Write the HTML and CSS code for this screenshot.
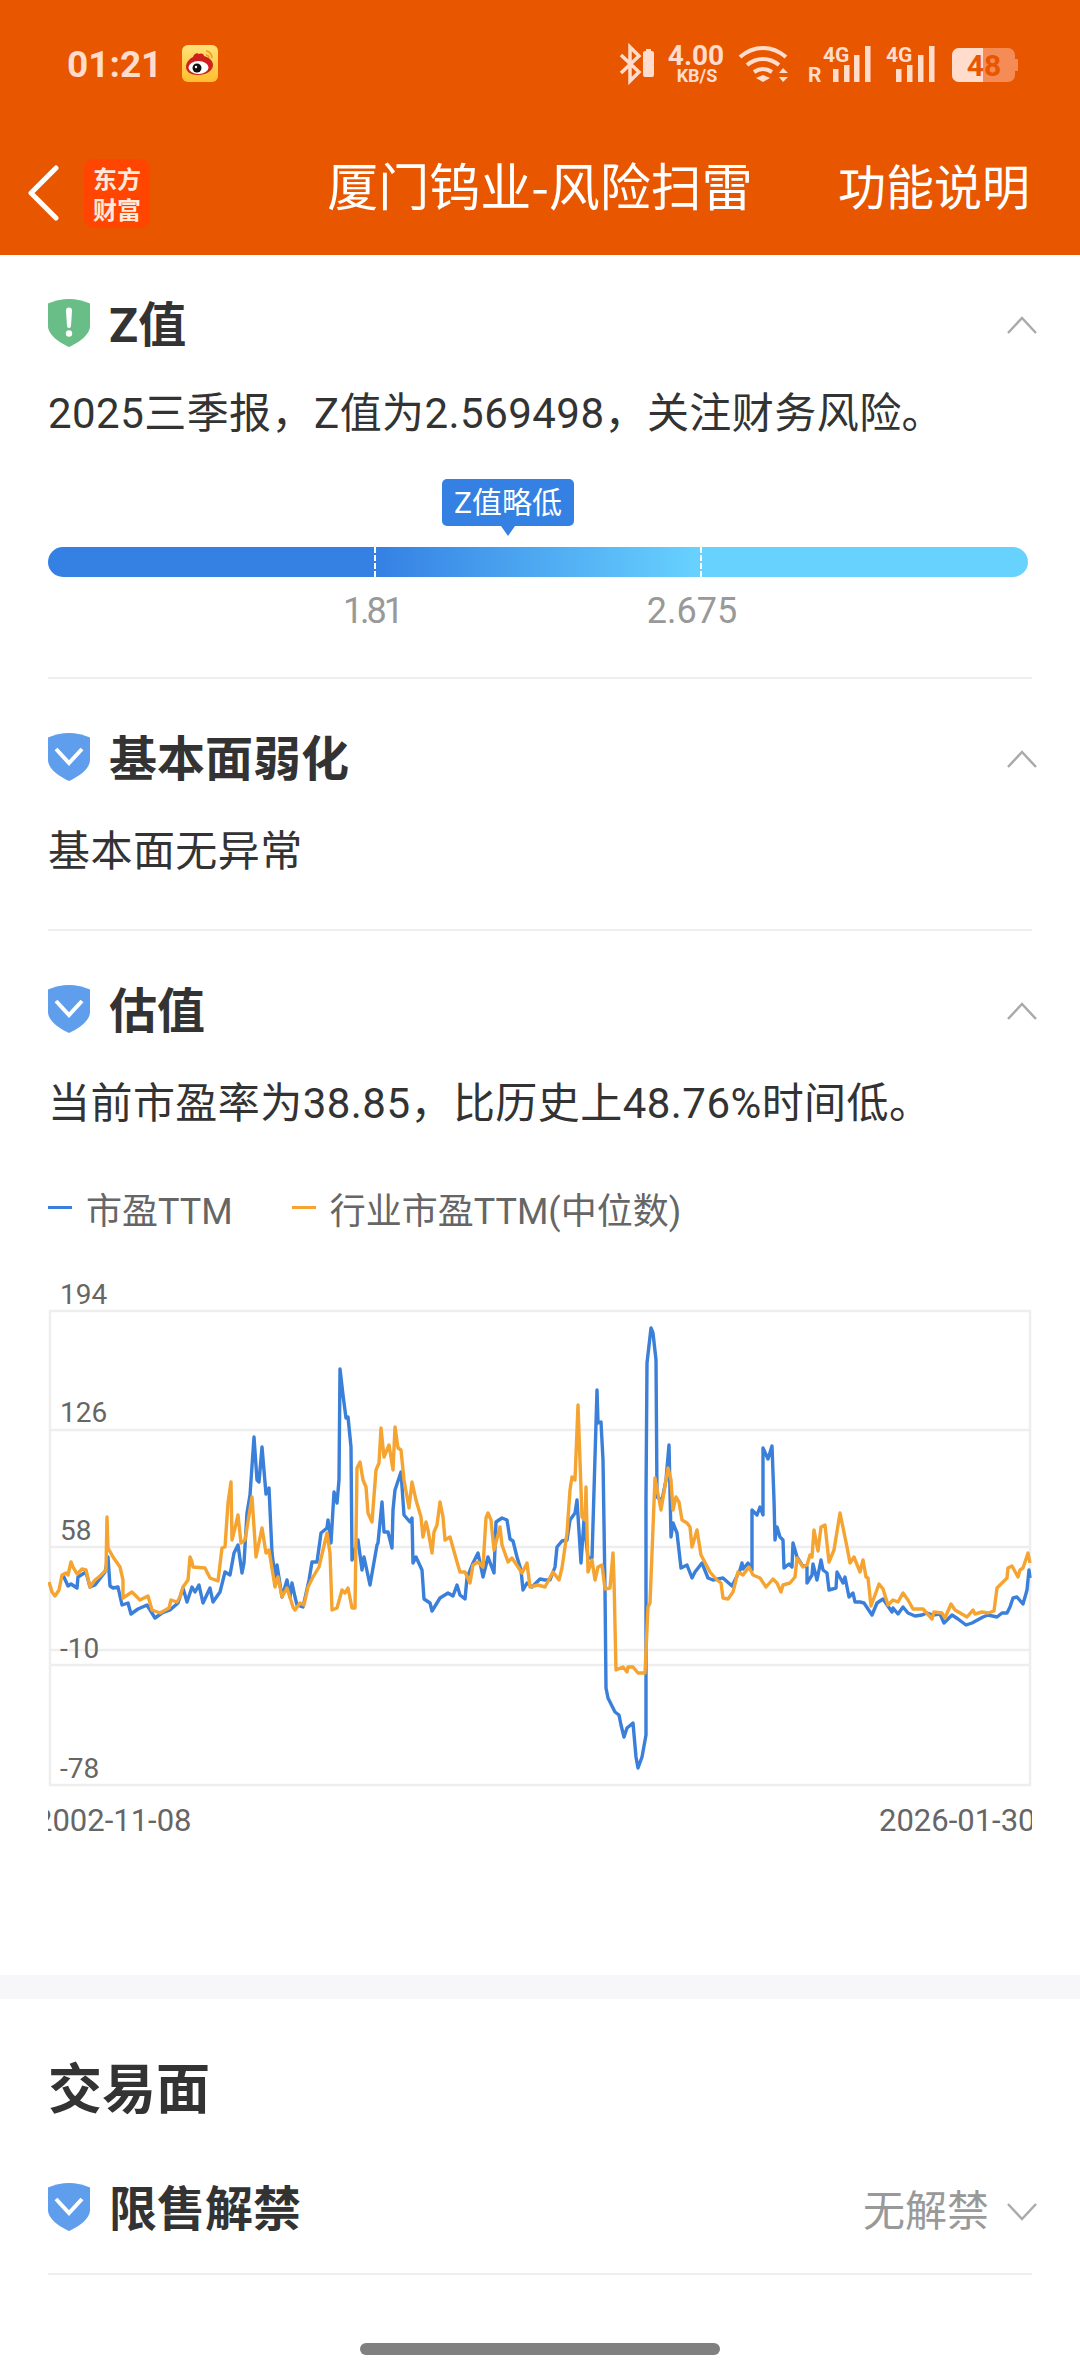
FILE: index.html
```html
<!DOCTYPE html>
<html lang="zh-CN">
<head>
  <meta charset="UTF-8" />
  <title>厦门钨业-风险扫雷</title>
  <link rel="stylesheet" href="styles.css">
</head>
<body>
  <header class="top">
    <div class="status-bar">
      <div class="status-left">
        <span class="time">01:21</span>
        <svg class="weibo" viewBox="0 0 36 37">
          <defs>
            <linearGradient id="weiboBg" x1="0" y1="0" x2="0" y2="1">
              <stop offset="0" stop-color="#ffe27a"/>
              <stop offset="1" stop-color="#ffbe2e"/>
            </linearGradient>
          </defs>
          <rect width="36" height="37" rx="6" fill="url(#weiboBg)"/>
          <path d="M4 22c0-4 3-8 7-10 1-3 4-5 6-3 1-1 5-1 5 2 4 1 9 4 9 9 0 6-7 10-15 10-7 0-12-3-12-8z" fill="#d0201c"/>
          <ellipse cx="16.500" cy="22.500" rx="10" ry="6.500" fill="#fff"/>
          <circle cx="15" cy="23" r="4.500" fill="#111"/>
          <circle cx="14" cy="22" r="1.200" fill="#fff"/>
          <path d="M24 6c3 0 6 3 6 7M24 10c1.500 0 3 1.500 3 3" fill="none" stroke="#f09a1a" stroke-width="1.600"/>
        </svg>
      </div>
      <svg class="status-right" viewBox="619 40 401 50">
        <path class="glyph-line" d="M622 55l18 17-9 9V47l9 9-18 17"/>
        <rect class="glyph" x="644" y="51" width="11" height="26" rx="2"/>
        <rect class="glyph" x="647" y="49" width="5" height="3"/>
        <text class="net-speed" x="697" y="65" text-anchor="middle">4.00</text>
        <text class="net-unit" x="698" y="82" text-anchor="middle">KB/S</text>
        <path class="glyph-wifi" d="M741 57c14-12 32-12 46 0M748 65c10-8 22-8 32 0M755 72c6-4 12-4 18 0"/>
        <path class="glyph" d="M764 75l-7 3 7 4 7-4z"/>
        <path class="glyph" d="M784 68l5 5h-9zM784 82l5-5h-9z"/>
        <text class="net-small" x="809" y="82">R</text>
        <text class="net-small" x="824" y="62">4G</text>
        <rect class="glyph" x="834" y="69" width="5.500" height="13"/>
        <rect class="glyph" x="845" y="65" width="5.500" height="17"/>
        <rect class="glyph" x="855" y="55" width="5.500" height="27"/>
        <rect class="glyph" x="866" y="46" width="5.500" height="36"/>
        <text class="net-small" x="887" y="62">4G</text>
        <rect class="glyph" x="897" y="69" width="5.500" height="13"/>
        <rect class="glyph" x="908" y="65" width="5.500" height="17"/>
        <rect class="glyph" x="919" y="55" width="5.500" height="27"/>
        <rect class="glyph" x="930" y="46" width="5.500" height="36"/>
        <rect class="battery-back" x="953" y="48" width="63" height="34" rx="7"/>
        <rect class="battery-back" x="1015" y="59" width="4" height="12" rx="1"/>
        <path class="glyph" d="M960 48h24v34h-24a7 7 0 0 1-7-7V55a7 7 0 0 1 7-7z"/>
        <text class="battery-text" x="985" y="76" text-anchor="middle">48</text>
      </svg>
    </div>
    <nav class="nav-bar">
      <div class="nav-left">
        <svg class="back" viewBox="0 0 32 56">
          <path d="M29 3L4 28l25 25" fill="none" stroke="#fff" stroke-width="5" stroke-linecap="round" stroke-linejoin="round"/>
        </svg>
        <div class="brand">东方<br>财富</div>
      </div>
      <div class="nav-title">厦门钨业-风险扫雷</div>
      <div class="nav-action">功能说明</div>
    </nav>
  </header>

  <section class="risk risk-first">
    <div class="risk-head">
      <svg class="shield" viewBox="0 0 42 48">
        <path d="M21 0c7 0 15 2 21 4.500V27c0 9-12 17-21 21C12 44 0 36 0 27V4.500C6 2 14 0 21 0z" fill="#68be86"/>
        <path d="M18 11.500a3 3 0 0 1 6 0L23 27a2 2 0 0 1-4 0z" fill="#fff"/>
        <circle cx="21" cy="34.500" r="3.200" fill="#fff"/>
      </svg>
      <h3>Z值</h3>
      <svg class="chevron" viewBox="0 0 30 18"><path d="M1 17L15 2l14 15"/></svg>
    </div>
    <p class="risk-text">2025三季报，Z值为2.569498，关注财务风险。</p>
    <div class="meter-tip">Z值略低</div>
    <div class="meter-bar">
      <i class="meter-tick tick-low"></i>
      <i class="meter-tick tick-high"></i>
    </div>
    <div class="meter-labels">
      <span class="label-narrow">1.81</span>
      <span>2.675</span>
    </div>
  </section>

  <section class="risk">
    <div class="risk-head">
      <svg class="shield" viewBox="0 0 42 48">
        <path d="M21 0c7 0 15 2 21 4.500V27c0 9-12 17-21 21C12 44 0 36 0 27V4.500C6 2 14 0 21 0z" fill="#5f9ded"/>
        <path d="M8 16l13 14 13-14" fill="none" stroke="#fff" stroke-width="4"/>
      </svg>
      <h3>基本面弱化</h3>
      <svg class="chevron" viewBox="0 0 30 18"><path d="M1 17L15 2l14 15"/></svg>
    </div>
    <p class="risk-text">基本面无异常</p>
  </section>

  <section class="risk risk-chart">
    <div class="risk-head">
      <svg class="shield" viewBox="0 0 42 48">
        <path d="M21 0c7 0 15 2 21 4.500V27c0 9-12 17-21 21C12 44 0 36 0 27V4.500C6 2 14 0 21 0z" fill="#5f9ded"/>
        <path d="M8 16l13 14 13-14" fill="none" stroke="#fff" stroke-width="4"/>
      </svg>
      <h3>估值</h3>
      <svg class="chevron" viewBox="0 0 30 18"><path d="M1 17L15 2l14 15"/></svg>
    </div>
    <p class="risk-text">当前市盈率为38.85，比历史上48.76%时间低。</p>

    <div class="legend">
      <span class="legend-item"><i class="dash dash-blue"></i>市盈TTM</span>
      <span class="legend-item"><i class="dash dash-orange"></i>行业市盈TTM(中位数)</span>
    </div>

    <svg class="pe-chart" viewBox="48 1275 984 560">
      <rect class="grid" x="50" y="1311" width="980" height="474"/>
      <path class="grid" d="M50 1430H1030M50 1547H1030M50 1650H1030M50 1665H1030"/>
      <text class="axis" x="60" y="1304">194</text>
      <text class="axis" x="60" y="1422">126</text>
      <text class="axis" x="60" y="1540">58</text>
      <text class="axis" x="60" y="1658">-10</text>
      <text class="axis" x="60" y="1778">-78</text>
      <text class="axis-date" x="35" y="1831">2002-11-08</text>
      <text class="axis-date" x="879" y="1831">2026-01-30</text>
      <polyline class="line-blue" points="63,1575 68,1586 71,1584 77,1588 78,1577 86,1572 90,1587 95,1585 105,1572 108,1557 110,1586 113,1588 118,1587 122,1605 128,1603 131,1614 138,1609 147,1605 155,1618 162,1613 170,1610 178,1603 183,1588 187,1602 192,1587 195,1592 199,1585 203,1603 210,1588 213,1602 220,1592 225,1572 230,1575 234,1553 238,1545 242,1573 244,1563 247,1513 250,1495 254,1437 257,1480 259,1482 262,1447 266,1494 269,1488 272,1553 275,1577 277,1565 282,1597 287,1580 290,1597 292,1583 295,1597 297,1605 303,1607 309,1580 312,1562 317,1562 321,1533 327,1528 328,1520 331,1543 334,1492 337,1503 339,1480 340,1369 343,1395 346,1418 348,1417 351,1447 352,1560 358,1540 362,1570 364,1557 370,1585 377,1545 378,1543 382,1502 384,1532 388,1532 392,1548 393,1510 395,1490 401,1472 404,1515 410,1522 412,1518 413,1563 416,1557 422,1570 424,1599 430,1603 432,1611 440,1598 448,1593 453,1596 457,1585 460,1595 465,1599 467,1578 473,1563 478,1553 483,1577 488,1557 494,1573 496,1522 502,1518 507,1520 510,1539 513,1541 517,1557 521,1570 523,1590 527,1583 532,1587 540,1579 545,1580 550,1580 555,1567 557,1547 562,1541 567,1540 570,1520 575,1513 577,1500 581,1563 584,1520 588,1558 592,1558 597,1390 598,1423 601,1422 603,1460 605,1590 606,1688 608,1698 615,1712 619,1715 621,1725 624,1737 627,1728 633,1723 636,1757 638,1768 642,1757 646,1735 646,1497 647,1363 651,1328 653,1333 656,1360 657,1497 662,1500 666,1480 669,1445 671,1537 673,1523 677,1533 681,1568 687,1565 692,1578 695,1572 702,1563 708,1578 713,1580 723,1578 732,1586 740,1570 742,1563 743,1569 748,1563 752,1570 752,1510 757,1515 760,1507 763,1515 763,1448 768,1459 772,1446 774,1500 775,1540 777,1527 780,1537 783,1540 784,1568 789,1564 792,1567 793,1543 797,1557 802,1565 807,1567 807,1583 812,1575 813,1564 817,1580 821,1560 823,1570 827,1573 829,1590 836,1588 837,1572 843,1583 845,1577 849,1597 853,1593 855,1602 860,1602 864,1603 872,1615 877,1603 883,1599 892,1612 893,1608 898,1614 903,1607 908,1613 915,1616 922,1615 927,1613 933,1615 940,1614 944,1623 952,1615 958,1619 966,1625 972,1623 983,1617 988,1615 997,1617 1002,1613 1007,1613 1010,1607 1013,1598 1017,1597 1023,1604 1027,1590 1029,1570 1030,1578"/>
      <polyline class="line-orange" points="49,1582 52,1592 55,1596 59,1590 62,1575 66,1573 68,1575 71,1562 73,1567 77,1574 82,1569 86,1570 90,1587 95,1580 100,1576 106,1570 107,1517 108,1548 113,1557 120,1567 123,1580 123,1598 132,1592 140,1600 148,1596 152,1610 160,1613 169,1608 171,1600 177,1602 180,1597 183,1587 188,1580 190,1557 192,1562 193,1567 205,1568 210,1578 218,1581 222,1548 225,1547 228,1503 231,1482 232,1540 235,1528 238,1515 241,1543 245,1540 252,1497 256,1557 262,1528 266,1553 269,1550 275,1587 278,1577 282,1597 287,1588 293,1607 295,1610 300,1603 304,1605 308,1587 313,1577 319,1567 323,1550 327,1533 330,1553 332,1610 337,1608 342,1590 345,1593 348,1588 352,1608 355,1608 357,1468 360,1462 363,1480 366,1487 368,1513 372,1522 376,1470 379,1463 381,1428 384,1457 389,1445 393,1470 395,1427 398,1448 401,1450 404,1480 409,1508 412,1482 416,1500 421,1517 423,1537 426,1522 428,1530 432,1553 434,1532 437,1525 440,1502 443,1517 445,1540 450,1537 457,1562 460,1572 465,1572 470,1583 473,1565 478,1562 483,1567 486,1518 488,1513 491,1520 494,1550 500,1527 502,1545 508,1562 512,1558 522,1573 527,1563 530,1587 538,1585 545,1587 553,1572 559,1580 562,1568 567,1533 570,1490 572,1477 575,1480 578,1405 582,1517 585,1520 586,1487 588,1572 592,1560 595,1580 598,1567 602,1565 605,1589 610,1588 613,1553 614,1580 616,1670 623,1667 627,1672 628,1667 633,1667 638,1673 645,1673 648,1607 650,1603 655,1478 661,1510 668,1468 671,1480 673,1510 676,1497 679,1502 682,1520 687,1523 690,1527 692,1547 695,1537 697,1530 701,1555 710,1572 717,1580 721,1583 723,1598 728,1599 733,1592 738,1572 743,1575 749,1567 753,1575 760,1578 766,1587 773,1579 777,1583 781,1592 783,1585 790,1583 795,1577 797,1558 803,1567 807,1565 810,1555 812,1557 814,1530 818,1551 821,1527 825,1525 829,1562 834,1550 840,1513 847,1547 850,1563 854,1557 860,1572 863,1560 866,1577 868,1578 871,1606 879,1584 883,1589 888,1605 893,1600 898,1602 903,1593 908,1600 913,1609 923,1609 932,1619 934,1612 942,1613 945,1618 951,1604 955,1610 967,1617 973,1610 975,1614 982,1612 988,1613 994,1611 997,1588 1007,1578 1008,1568 1012,1566 1018,1577 1020,1570 1023,1568 1028,1553 1030,1563"/>
    </svg>
  </section>

  <div class="band"></div>

  <h2 class="group-title">交易面</h2>
  <section class="risk risk-last">
    <div class="risk-head">
      <svg class="shield" viewBox="0 0 42 48">
        <path d="M21 0c7 0 15 2 21 4.500V27c0 9-12 17-21 21C12 44 0 36 0 27V4.500C6 2 14 0 21 0z" fill="#5f9ded"/>
        <path d="M8 16l13 14 13-14" fill="none" stroke="#fff" stroke-width="4"/>
      </svg>
      <h3>限售解禁</h3>
      <span class="risk-note">无解禁</span>
      <svg class="chevron chevron-note" viewBox="0 0 30 18"><path d="M1 1l14 15L29 1"/></svg>
    </div>
  </section>

  <div class="home-bar"></div>
</body>
</html>
```

FILE: styles.css
```css
* {
  box-sizing: border-box;
}

body {
  margin: 0;
  background-color: #fff;
  color: #333;
  font-family: Roboto, "Noto Sans CJK SC", sans-serif;
}

.top {
  height: 255px;
  background-color: #e85600;
}

.status-bar {
  display: flex;
  justify-content: space-between;
  align-items: center;
  height: 126px;
  padding: 0 61px 0 67px;
}

.status-left {
  display: flex;
  align-items: center;
  gap: 20px;
}

.time {
  margin-top: 2px;
  color: #ffdccb;
  font-size: 37px;
  font-weight: 700;
}

.weibo {
  width: 36px;
  height: 37px;
}

.status-right {
  width: 401px;
  height: 50px;
  margin-top: 4px;
}

.glyph {
  fill: #ffdccb;
}

.glyph-line {
  fill: none;
  stroke: #ffdccb;
  stroke-width: 3.500;
}

.glyph-wifi {
  fill: none;
  stroke: #ffdccb;
  stroke-width: 4;
}

.net-speed {
  fill: #ffdccb;
  font-size: 28px;
  font-weight: 700;
}

.net-unit {
  fill: #ffdccb;
  font-size: 18px;
  font-weight: 700;
}

.net-small {
  fill: #ffdccb;
  font-size: 21px;
  font-weight: 700;
}

.battery-back {
  fill: #f58b55;
}

.battery-text {
  fill: #e85600;
  font-size: 30px;
  font-weight: 700;
}

.nav-bar {
  display: grid;
  grid-template-columns: 1fr auto 1fr;
  align-items: center;
  height: 128px;
  padding: 0 27px;
  color: #fff;
}

.nav-left {
  display: flex;
  align-items: center;
  gap: 25px;
  margin-top: 6px;
}

.back {
  width: 32px;
  height: 56px;
}

.brand {
  width: 66px;
  height: 69px;
  border-radius: 10px;
  background-color: #ff4500;
  color: #ffe9dd;
  font-family: "Noto Sans CJK SC", sans-serif;
  font-size: 24px;
  font-weight: 700;
  line-height: 31px;
  text-align: center;
  padding-top: 3px;
}

.nav-title {
  margin-top: -12px;
  font-family: "Noto Sans CJK SC", sans-serif;
  font-size: 51px;
}

.nav-action {
  justify-self: end;
  margin: -12px 23px 0 0;
  font-family: "Noto Sans CJK SC", sans-serif;
  font-size: 48px;
}

.risk {
  margin: 0 48px;
  padding: 49px 0 47px;
  border-bottom: 2px solid #eee;
}

.risk-first {
  padding-top: 39px;
}

.risk-chart {
  padding-bottom: 140px;
  border-bottom: none;
}

.risk-last {
  padding: 52px 0 37px;
}

.risk-head {
  display: flex;
  align-items: center;
  height: 58px;
}

.risk-head h3 {
  flex: 1;
  margin: -5px 0 0 19px;
  font-size: 48px;
  font-weight: 700;
}

.shield {
  width: 42px;
  height: 48px;
}

.chevron {
  width: 30px;
  height: 18px;
  margin: 4px -5px 0 0;
}

.chevron path {
  fill: none;
  stroke: #aaa;
  stroke-width: 2.500;
}

.chevron-note {
  margin: 10px -5px 0 18px;
}

.risk-note {
  color: #999;
  font-size: 42px;
}

.risk-text {
  margin: 36px 0 0;
  font-size: 42px;
  letter-spacing: 0.450px;
  line-height: 60px;
}

.risk-first .risk-text {
  margin-top: 32px;
}

.meter-tip {
  position: relative;
  width: 132px;
  height: 47px;
  margin: 35px 0 0 394px;
  border-radius: 5px;
  background-color: #3480e3;
  color: #fff;
  font-size: 30px;
  line-height: 47px;
  text-align: center;
}

.meter-tip::after {
  content: "";
  position: absolute;
  top: 47px;
  left: 59px;
  border-top: 10px solid #3480e3;
  border-left: 7px solid transparent;
  border-right: 7px solid transparent;
}

.meter-bar {
  position: relative;
  height: 30px;
  margin: 21px 4px 0 0;
  border-radius: 15px;
  background-image: linear-gradient(90deg, #3480e3 0, #3480e3 327px, #68d2ff 653px, #68d2ff 100%);
}

.meter-tick {
  position: absolute;
  top: 0;
  bottom: 0;
  border-left: 2px dashed #fff;
}

.tick-low {
  left: 326px;
}

.tick-high {
  left: 652px;
}

.meter-labels {
  display: flex;
  gap: 120px;
  margin-top: 15px;
  padding-left: 224px;
  color: #999;
  font-size: 36px;
  line-height: 38px;
}

.meter-labels span {
  width: 200px;
  text-align: center;
}

.meter-labels .label-narrow {
  letter-spacing: -3px;
}

.legend {
  display: flex;
  gap: 59px;
  margin-top: 58px;
  color: #666;
  font-size: 36px;
  line-height: 40px;
}

.legend-item {
  display: flex;
  align-items: center;
}

.dash {
  width: 24px;
  height: 3px;
  margin: -10px 14px 0 0;
}

.dash-blue {
  background-color: #3a7fd9;
}

.dash-orange {
  background-color: #f5a431;
}

.pe-chart {
  display: block;
  width: 984px;
  height: 560px;
  margin-top: 43px;
}

.grid {
  fill: none;
  stroke: #eee;
  stroke-width: 2.500;
}

.axis {
  fill: #666;
  font-size: 28px;
}

.axis-date {
  fill: #666;
  font-size: 31px;
}

.line-blue,
.line-orange {
  fill: none;
  stroke-width: 3.400;
  stroke-linejoin: round;
}

.line-blue {
  stroke: #3a7fd9;
}

.line-orange {
  stroke: #f5a431;
}

.band {
  height: 24px;
  background-color: #f7f7f9;
}

.group-title {
  margin: 57px 48px 0;
  font-size: 54px;
  font-weight: 700;
  line-height: 70px;
}

.home-bar {
  width: 360px;
  height: 12px;
  margin: 68px auto 0;
  border-radius: 6px;
  background-color: #808080;
}
```
